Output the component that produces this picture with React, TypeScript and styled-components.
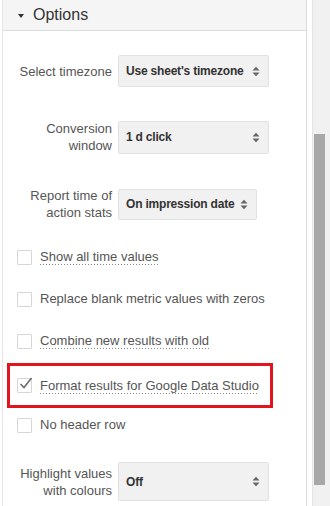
import React from 'react';
import styled, { createGlobalStyle } from 'styled-components';

const GlobalStyle = createGlobalStyle`
  html, body {
    margin: 0;
    padding: 0;
    background: #ffffff;
  }
  body {
    width: 330px;
    height: 506px;
    overflow: hidden;
    font-family: 'Liberation Sans', Arial, sans-serif;
  }
`;

const Frame = styled.div`
  display: flex;
  width: 330px;
  height: 506px;
`;

const Panel = styled.div`
  width: 303px;
  margin-left: 2px;
  border-left: 1px solid #e6e6e6;
  border-right: 1px solid #dcdcdc;
  display: flex;
  flex-direction: column;
`;

const Header = styled.div`
  height: 30px;
  display: flex;
  align-items: center;
  gap: 9px;
  padding-left: 15px;
  background: #f5f5f5;
  border-bottom: 1px solid #dddddd;
  color: #333333;
  font-size: 16px;
`;

const Caret = styled.span`
  width: 0;
  height: 0;
  border-left: 3.5px solid transparent;
  border-right: 3.5px solid transparent;
  border-top: 4px solid #333333;
  margin-top: 1px;
`;

const Body = styled.div`
  display: flex;
  flex-direction: column;
  padding-top: 24px;
`;

const SelectRow = styled.div<{ $before?: number; $after: number }>`
  display: flex;
  align-items: center;
  gap: 6px;
  padding-left: 15px;
  margin-top: ${(p) => p.$before ?? 0}px;
  margin-bottom: ${(p) => p.$after}px;
`;

const Label = styled.div`
  width: 94px;
  text-align: right;
  font-size: 13px;
  line-height: 17px;
  color: #555555;
`;

const Select = styled.div<{ $w: number; $h: number }>`
  width: ${(p) => p.$w}px;
  height: ${(p) => p.$h}px;
  box-sizing: border-box;
  display: flex;
  align-items: center;
  justify-content: space-between;
  padding: 0 8px 0 7px;
  background: #f1f1f1;
  border: 1px solid #e2e2e2;
  border-radius: 2px;
  font-size: 12px;
  letter-spacing: -0.2px;
  font-weight: bold;
  color: #333333;
  white-space: nowrap;
`;

const Arrows = () => (
  <svg width="8" height="11" viewBox="0 0 8 11">
    <path d="M0.5 4.5 L4 0.8 L7.5 4.5 Z" fill="#666666" />
    <path d="M0.5 6.5 L4 10.2 L7.5 6.5 Z" fill="#666666" />
  </svg>
);

const CheckRow = styled.div`
  display: flex;
  align-items: center;
  gap: 8px;
  height: 42px;
  padding-left: 14px;
  font-size: 13px;
  color: #555555;
`;

const Highlight = styled.div`
  margin: 1px 0 -4px 4px;
  width: 266px;
  height: 45px;
  box-sizing: border-box;
  border: 3px solid #e3141f;
  display: flex;
  align-items: center;
  gap: 8px;
  padding-left: 7px;
  font-size: 13px;
  color: #555555;
`;

const Box = styled.span`
  position: relative;
  width: 13px;
  height: 13px;
  border: 1px solid #d6d6d6;
  border-radius: 1px;
  background: #ffffff;
  flex-shrink: 0;
`;

const Tick = styled.svg`
  position: absolute;
  left: 1px;
  top: -3px;
`;

const Text = styled.span<{ $dotted?: boolean }>`
  padding-bottom: 1px;
  ${(p) =>
    p.$dotted &&
    `
    background-image: linear-gradient(to right, #8a8a8a 1px, transparent 1px);
    background-size: 3px 1px;
    background-repeat: repeat-x;
    background-position: 0 100%;
  `}
`;

const Track = styled.div`
  margin-left: 5px;
  flex: 1;
  background: #f1f1f1;
  border-left: 1px solid #e4e4e4;
  display: flex;
  flex-direction: column;
  padding-top: 134px;
  padding-left: 1px;
`;

const Thumb = styled.div`
  width: 11px;
  height: 351px;
  background: #a8a8a8;
`;

const Check = ({ checked }: { checked?: boolean }) => (
  <Box>
    {checked && (
      <Tick width="14" height="14" viewBox="0 0 14 14">
        <path d="M1.5 8 L5 11.5 L12.5 2" fill="none" stroke="#6b6b6b" strokeWidth="1.6" />
      </Tick>
    )}
  </Box>
);

const App = () => (
  <>
    <GlobalStyle />
    <Frame>
      <Panel>
        <Header>
          <Caret />
          Options
        </Header>
        <Body>
          <SelectRow $after={33}>
            <Label>Select timezone</Label>
            <Select $w={151} $h={32}>
              Use sheet's timezone
              <Arrows />
            </Select>
          </SelectRow>
          <SelectRow $after={33}>
            <Label>
              Conversion
              <br />
              window
            </Label>
            <Select $w={151} $h={33}>
              1 d click
              <Arrows />
            </Select>
          </SelectRow>
          <SelectRow $after={15}>
            <Label>
              Report time of
              <br />
              action stats
            </Label>
            <Select $w={139} $h={31}>
              On impression date
              <Arrows />
            </Select>
          </SelectRow>
          <CheckRow>
            <Check />
            <Text $dotted>Show all time values</Text>
          </CheckRow>
          <CheckRow>
            <Check />
            <Text>Replace blank metric values with zeros</Text>
          </CheckRow>
          <CheckRow>
            <Check />
            <Text $dotted>Combine new results with old</Text>
          </CheckRow>
          <Highlight>
            <Check checked />
            <Text $dotted>Format results for Google Data Studio</Text>
          </Highlight>
          <CheckRow>
            <Check />
            <Text>No header row</Text>
          </CheckRow>
          <SelectRow $before={16} $after={0}>
            <Label>
              Highlight values
              <br />
              with colours
            </Label>
            <Select $w={151} $h={39}>
              Off
              <Arrows />
            </Select>
          </SelectRow>
        </Body>
      </Panel>
      <Track>
        <Thumb />
      </Track>
    </Frame>
  </>
);

export default App;
